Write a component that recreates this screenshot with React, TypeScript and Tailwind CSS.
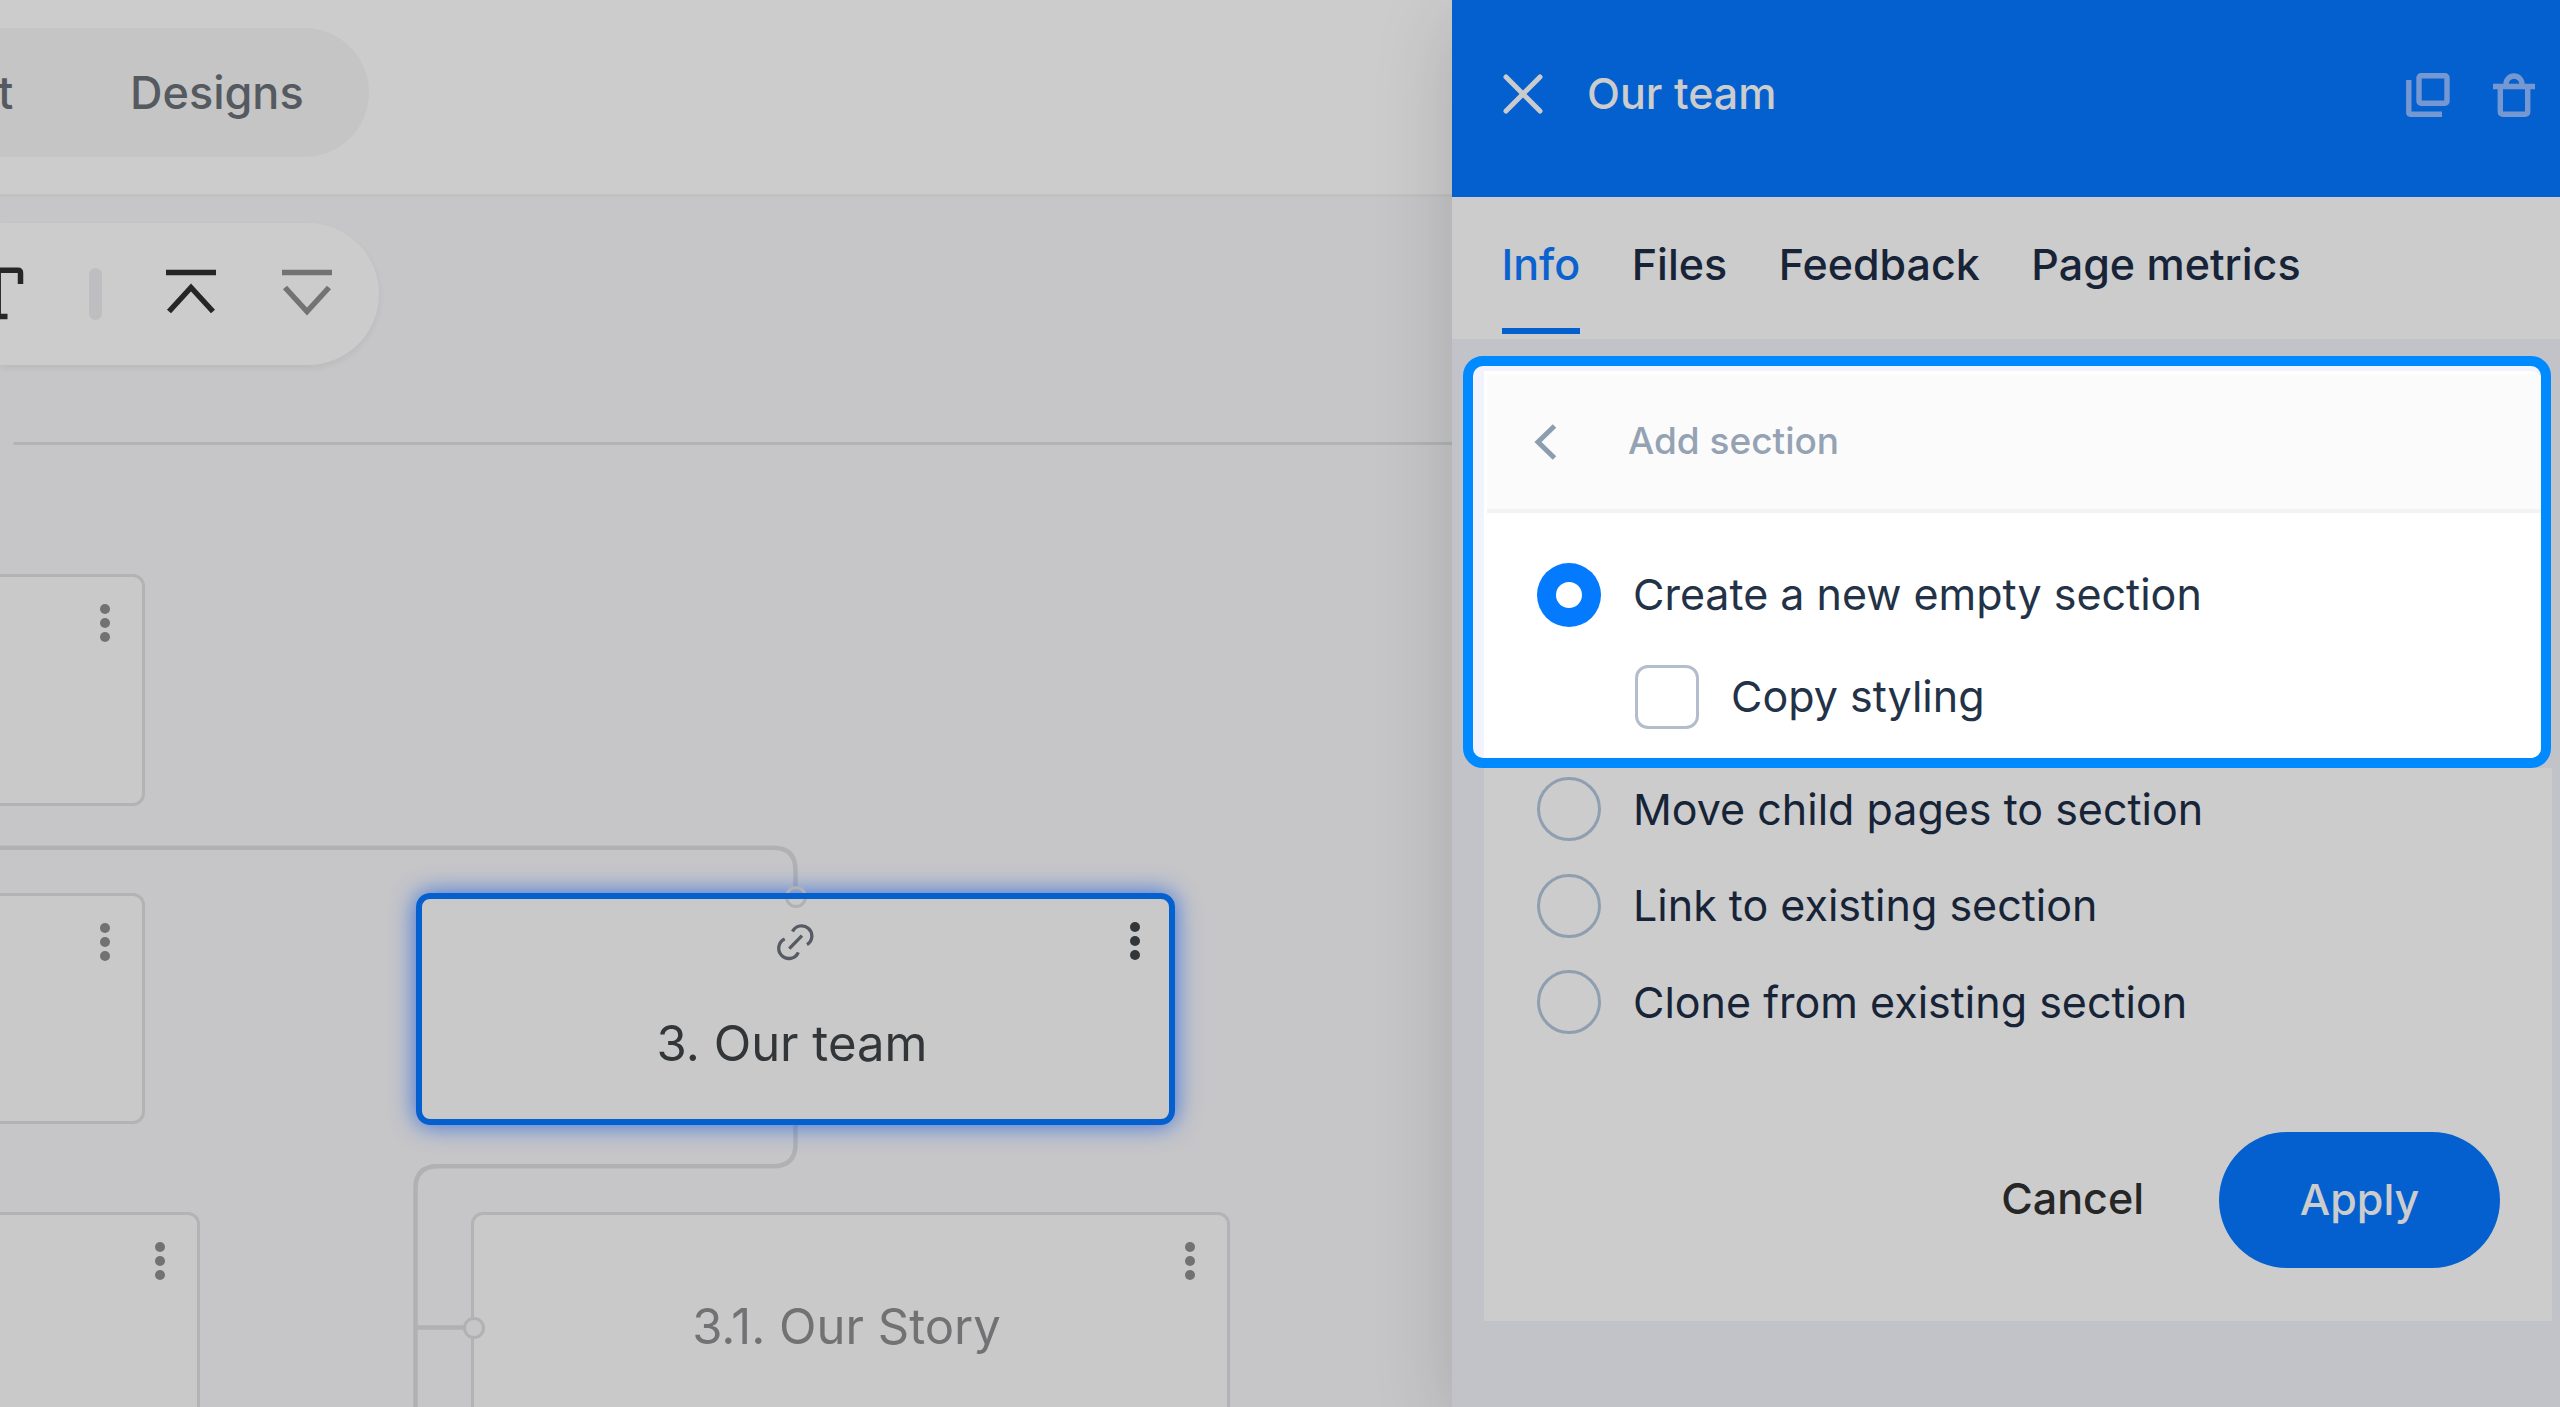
import React from "react";

const dotRows = [0, 1, 2];

const Dots: React.FC<{ dark?: boolean }> = ({ dark }) => (
    <div className="flex flex-col gap-1">
        {dotRows.map((i) => (
            <span key={i} className={dark ? "size-2.5 rounded-full bg-[#333639]" : "size-2.5 rounded-full bg-[#727274]"} />
        ))}
    </div>
);

const TopBar: React.FC = () => (
    <header className="flex h-[197px] items-start border-b-[3px] border-[#c1c1c1] bg-[#cccccc] pt-[28px]">
        <nav className="flex h-[129px] w-[369px] items-center rounded-r-full bg-[#c5c5c5] text-[45px] font-medium text-[#555a61]">
            <span className="-ml-[2px] w-[132px]">t</span>
            <span>Designs</span>
        </nav>
    </header>
);

const Toolbar: React.FC = () => (
    <div className="flex h-[142px] w-[379px] items-center rounded-r-full bg-[#cccccc] shadow-[0_3px_6px_rgba(0,0,0,0.06)]">
        <svg className="h-[60px] w-[89px]" viewBox="0 0 89 60" fill="none" stroke="#262626" strokeWidth="5.500">
            <path d="M-24 20V6.200H18Q20.500 6.200 20.500 9V20M-1.800 6V53M-12 52.500H7.500" />
        </svg>
        <span className="h-[52px] w-[13px] rounded-full bg-[#bebec0]" />
        <svg className="ml-[64px] h-[52px] w-[50px]" viewBox="0 0 50 52" fill="none" stroke="#262626" strokeWidth="5.500">
            <path d="M0 4.500H50M3 43.500L25 19.500L47 43.500" />
        </svg>
        <svg className="ml-[66px] h-[52px] w-[50px]" viewBox="0 0 50 52" fill="none" stroke="#737373" strokeWidth="5.500">
            <path d="M0 4.500H50M3 19.500L25 43.500L47 19.500" />
        </svg>
    </div>
);

const Sitemap: React.FC = () => (
    <div className="absolute inset-0 overflow-hidden">
        {/* Connectors */}
        <svg className="absolute inset-0 h-full w-full" fill="none" stroke="#b0b1b3" strokeWidth="4.500">
            <path d="M13.500 443.500H1452" stroke="#b2b3b5" strokeWidth="3" />
            <path d="M0 847.700H773Q795.500 847.700 795.500 870V887" />
            <path d="M795.500 1120V1144Q795.500 1166.300 773 1166.300H438Q415.500 1166.300 415.500 1188V1407M415.500 1327.500H464" />
        </svg>

        {/* Pages */}
        <div className="absolute top-[574px] -left-[20px] flex h-[232px] w-[165px] justify-end rounded-[12px] border-[3px] border-[#b3b3b5] bg-[#c9c9c9] pt-[27px] pr-[32px]">
            <Dots />
        </div>
        <div className="absolute top-[893px] -left-[20px] flex h-[231px] w-[165px] justify-end rounded-[12px] border-[3px] border-[#b3b3b5] bg-[#c9c9c9] pt-[27px] pr-[32px]">
            <Dots />
        </div>
        <div className="absolute top-[1212px] -left-[20px] flex h-[232px] w-[220px] justify-end rounded-[12px] border-[3px] border-[#b3b3b5] bg-[#c9c9c9] pt-[27px] pr-[32px]">
            <Dots />
        </div>

        {/* Selected page */}
        <div className="absolute top-[893px] left-[416px] h-[232px] w-[759px] rounded-[14px] bg-[#c9c9c9] shadow-[0_0_24px_rgba(4,80,230,0.75)]" />
        <span className="absolute top-[885.5px] left-[784.5px] size-[22px] rounded-full border-[3px] border-[#b0b1b3]" />
        <div className="absolute top-[893px] left-[416px] h-[232px] w-[759px] rounded-[14px] border-[6.5px] border-[#0460cf]">
            <svg className="absolute top-[25px] left-[354px] size-[38px]" viewBox="0 0 38 38" fill="none" stroke="#555a63" strokeWidth="3.300">
                <path d="M13.300 24.700L26 11.600" />
                <path d="M16.500 7.500A10.200 10.200 0 1 1 31 20.700" />
                <path d="M8.700 15A10.200 10.200 0 1 0 22.300 28.300" />
            </svg>
            <div className="absolute top-[23px] right-[29px]">
                <Dots dark />
            </div>
            <p className="mt-[115px] pr-[7px] text-center text-[49px] leading-[60px] text-[#333639]">3. Our team</p>
        </div>

        <div className="absolute top-[1212px] left-[471px] h-[232px] w-[759px] rounded-[12px] border-[3px] border-[#b3b3b5] bg-[#c9c9c9]">
            <div className="absolute top-[27px] right-[32px]">
                <Dots />
            </div>
            <p className="mt-[82px] pr-[8px] text-center text-[49px] leading-[60px] text-[#727274]">3.1. Our Story</p>
        </div>
        <span className="absolute top-[1316.5px] left-[463px] size-[22px] rounded-full border-[3px] border-[#b0b1b3] bg-[#c6c6c8]" />
    </div>
);

const PanelHeader: React.FC = () => (
    <div className="flex h-[197px] items-center bg-[#0460cf] pb-[7px] pl-[51px]">
        <svg className="-mt-[2px] size-[40px]" viewBox="0 0 40 40" fill="none" stroke="#cacbcd" strokeWidth="5" strokeLinecap="round">
            <path d="M3 3L37 37M37 3L3 37" />
        </svg>
        <h1 className="-mt-[4px] ml-[44px] flex-1 text-[43px] font-medium text-[#cccccc]">Our team</h1>
        <svg className="mr-[43px] h-[44px] w-[44px]" viewBox="0 0 44 44" fill="none" stroke="#7598d2" strokeWidth="5.400">
            <rect x="13" y="2.800" width="28" height="27.500" rx="2" />
            <path d="M2.800 7V39.500Q2.800 41.200 4.500 41.200H36" />
        </svg>
        <svg className="mr-[25px] h-[44px] w-[42px]" viewBox="0 0 42 44" fill="none" stroke="#7598d2" strokeWidth="5.400">
            <path d="M0 13.500H42M7.300 13.500V38.500Q7.300 41.200 10.200 41.200H31.800Q34.700 41.200 34.700 38.500V13.500M13 13V11A8 8 0 0 1 29 11V13" />
        </svg>
    </div>
);

const Tabs: React.FC = () => (
    <div className="flex h-[142px] gap-[51.5px] bg-[#cccccc] pl-[49.5px] text-[43px] font-medium text-[#172438]">
        <span className="flex h-[137px] items-center border-b-[6px] border-[#0460cf] pt-[3px] text-[#0b62cf]">Info</span>
        <span className="flex h-[131px] items-center pt-[3px]">Files</span>
        <span className="flex h-[131px] items-center pt-[3px]">Feedback</span>
        <span className="flex h-[131px] items-center pt-[3px]">Page metrics</span>
    </div>
);

const options = ["Move child pages to section", "Link to existing section", "Clone from existing section"];

const AddSection: React.FC = () => (
    <div className="pt-[17px]">
        {/* Highlighted part of the card */}
        <div className="ml-[11px] h-[412px] w-[1088px] rounded-[20px] border-[10.5px] border-[#008aff] bg-[#f3f3fe]">
            <div className="h-full pt-[5px] pl-[11px]">
                <div className="h-full rounded-r-[10px] bg-white pt-[3px] pl-[3px]">
                    <div className="flex h-[139px] items-center rounded-tr-[8px] border-b-4 border-[#f3f3f3] bg-[#fbfbfb] pl-[47px]">
                        <svg className="h-[38px] w-[22px]" viewBox="0 0 22 38" fill="none" stroke="#8c9db0" strokeWidth="5">
                            <path d="M20.500 3L4 19L20.500 35" />
                        </svg>
                        <span className="ml-[72px] pb-[2px] text-[37px] font-medium text-[#94a2b3]">Add section</span>
                    </div>
                    <div className="pt-[50px] pl-[50px] text-[43px] text-[#233246]">
                        <label className="flex h-[64px] items-center">
                            <span className="flex size-[64px] items-center justify-center rounded-full bg-[#047aff]">
                                <span className="size-[26px] rounded-full bg-white" />
                            </span>
                            <span className="ml-[32px] pb-[2px]">Create a new empty section</span>
                        </label>
                        <label className="mt-[38px] ml-[98px] flex h-[64px] items-center">
                            <span className="size-[64px] rounded-[13px] border-[3px] border-[#b4bdcb]" />
                            <span className="ml-[32px] pb-[2px]">Copy styling</span>
                        </label>
                    </div>
                </div>
            </div>
        </div>

        {/* Rest of the options */}
        <div className="mr-2 ml-8 h-[553px] bg-[#cccccc] pt-[9px] pl-[53px]">
            <div className="flex flex-col gap-8 text-[43px] text-[#172438]">
                {options.map((option) => (
                    <label key={option} className="flex h-[64.5px] items-center">
                        <span className="size-[64px] rounded-full border-[3px] border-[#8f9eb0]" />
                        <span className="ml-[32px] pb-[1px]">{option}</span>
                    </label>
                ))}
            </div>
            <div className="mt-[97px] flex items-center justify-end gap-[75px] pr-[52px] text-[43px] font-medium">
                <button className="pb-[3px] text-[#262626]">Cancel</button>
                <button className="h-[136px] w-[281px] rounded-full bg-[#0460cf] text-[#cccccc]">Apply</button>
            </div>
        </div>
    </div>
);

const App: React.FC = () => {
    return (
        <div className="relative flex h-[1407px] w-[2560px] overflow-hidden bg-[#c6c6c8] font-['Inter',sans-serif]">
            <main className="w-[1452px]">
                <Sitemap />
                <TopBar />
                <div className="relative pt-[26px]">
                    <Toolbar />
                </div>
            </main>
            <aside className="relative h-full w-[1108px] bg-[#c2c3c8] shadow-[0_20px_76px_rgba(0,0,0,0.15)]">
                <PanelHeader />
                <Tabs />
                <AddSection />
            </aside>
        </div>
    );
};

export default App;
